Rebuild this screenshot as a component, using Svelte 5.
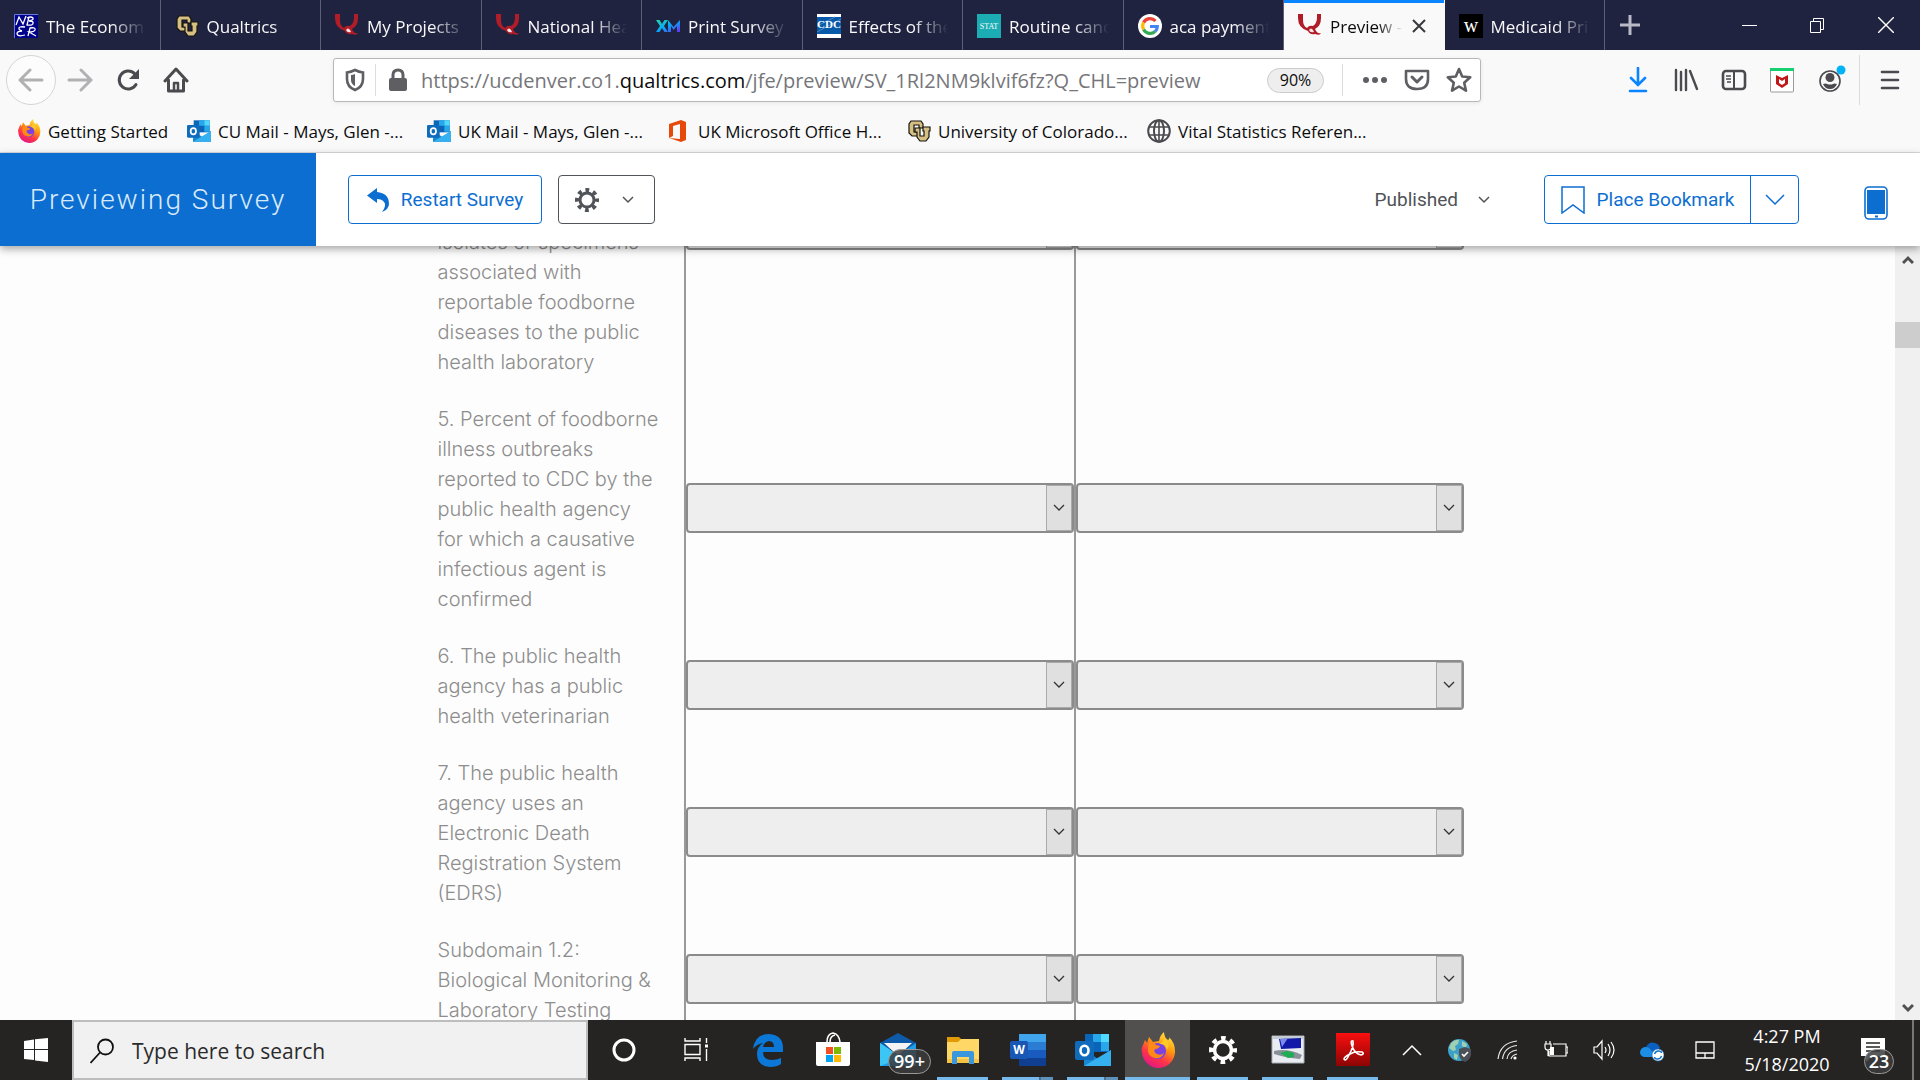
<script>
  const tabs = [
    { icon: 'nber', title: 'The Econom' },
    { icon: 'cu', title: 'Qualtrics' },
    { icon: 'qual', title: 'My Projects' },
    { icon: 'qual', title: 'National Hea' },
    { icon: 'xm', title: 'Print Survey' },
    { icon: 'cdc', title: 'Effects of the' },
    { icon: 'stat', title: 'Routine canc' },
    { icon: 'google', title: 'aca payment' },
    { icon: 'qual', title: 'Preview -', active: true },
    { icon: 'wapo', title: 'Medicaid Pri' }
  ];

  const bookmarks = [
    { icon: 'firefox', title: 'Getting Started' },
    { icon: 'outlook', title: 'CU Mail - Mays, Glen -...' },
    { icon: 'outlook', title: 'UK Mail - Mays, Glen -...' },
    { icon: 'office', title: 'UK Microsoft Office H...' },
    { icon: 'cu', title: 'University of Colorado...' },
    { icon: 'globe', title: 'Vital Statistics Referen...' }
  ];

  const rows = [
    { id: 'q4', lines: ['isolates or specimens', 'associated with', 'reportable foodborne', 'diseases to the public', 'health laboratory'] },
    { id: 'q5', lines: ['5. Percent of foodborne', 'illness outbreaks', 'reported to CDC by the', 'public health agency', 'for which a causative', 'infectious agent is', 'confirmed'] },
    { id: 'q6', lines: ['6. The public health', 'agency has a public', 'health veterinarian'] },
    { id: 'q7', lines: ['7. The public health', 'agency uses an', 'Electronic Death', 'Registration System', '(EDRS)'] },
    { id: 's12', lines: ['Subdomain 1.2:', 'Biological Monitoring &', 'Laboratory Testing'] }
  ];

  const apps = [
    { icon: 'edge', label: 'Microsoft Edge' },
    { icon: 'store', label: 'Microsoft Store' },
    { icon: 'mail', label: 'Mail', badge: '99+' },
    { icon: 'explorer', label: 'File Explorer', open: true },
    { icon: 'word', label: 'Word', open: true, stacked: true },
    { icon: 'outlook', label: 'Outlook', open: true, stacked: true },
    { icon: 'firefox', label: 'Firefox', open: true, current: true },
    { icon: 'settings', label: 'Settings', open: true },
    { icon: 'remote', label: 'Remote session', open: true },
    { icon: 'acrobat', label: 'Acrobat', open: true }
  ];

  const tray = [
    { icon: 'up', label: 'Show hidden icons' },
    { icon: 'vpn', label: 'Secure connection' },
    { icon: 'wifi', label: 'Network' },
    { icon: 'battery', label: 'Battery' },
    { icon: 'sound', label: 'Volume' },
    { icon: 'onedrive', label: 'OneDrive' },
    { icon: 'touchpad', label: 'Touchpad' }
  ];
</script>

{#snippet art(name)}
  {#if name === 'nber'}
    <svg viewBox="0 0 24 24"><path fill="#00008b" d="M0 0h24v24H0z" /><path d="M.5 24V.5H24" fill="none" stroke="#6a7ad8" /><path d="M2 11 5 3l4 7 3-8M15 3l-2 8q7 1 6-3-1-1-4-1 5-1 4-3-2-2-6 0M11 13q-7-1-6 2 0 1 3 2-5 0-5 3 1 3 8 1M14 22l2-8q6-1 5 2-1 2-6 2l7 4" fill="none" stroke="#fff" stroke-width="1.300" /></svg>
  {:else if name === 'cu'}
    <svg viewBox="0 0 24 24"><path d="M4 2h10l2 3v4h-4V6H7v7h4v4H5l-3-3V5z" fill="#d6bf82" stroke="#17150f" stroke-width="1.200" /><path d="M8 9h5v8h4v-5h-1V8h7v4h-1v6l-3 4h-6l-3-4v-5H8z" fill="#d6bf82" stroke="#17150f" stroke-width="1.200" /></svg>
  {:else if name === 'qual'}
    <svg viewBox="0 0 24 24"><path d="M0 0h5v6q0 6 4 8 2-3 6-2 4-3 4-8V0h4v4q0 8-6 11l1 2q2 3 5 2-1 3-6 1-5 1-7-3Q0 14 0 4z" fill="#b01c27" /><path d="M11 16q2-3 4 0l1 2q-4 1-5-2" fill="#f7e3e5" /></svg>
  {:else if name === 'xm'}
    <svg viewBox="0 0 24 24"><defs><linearGradient id="xg" x2="1" y2="1"><stop stop-color="#21dbaa" /><stop offset=".5" stop-color="#06a7fa" /><stop offset="1" stop-color="#6e2cf5" /></linearGradient></defs><path d="m0 6 4 6-4 6h3.500l2.500-4 2.500 4H12l-4-6 4-6H8.500L6 10 3.500 6zM12 18V6l5.500 7L24 6v12h-3v-6l-3.500 4-2.500-4v6z" fill="url(#xg)" /></svg>
  {:else if name === 'cdc'}
    <svg viewBox="0 0 24 24"><path fill="#fff" d="M0 0h24v24H0z" /><path fill="#075aaa" d="M0 3h24v17H0z" /><path d="M0 18 24 5M0 12 18 3" stroke="#4c8bc6" /><text x="12" y="14" text-anchor="middle" font-family="Liberation Serif, serif" font-size="11" font-weight="700" fill="#fff">CDC</text></svg>
  {:else if name === 'stat'}
    <svg viewBox="0 0 24 24"><path fill="#1bacb4" d="M0 0h24v24H0z" /><text x="12" y="15" text-anchor="middle" font-family="Liberation Serif, serif" font-size="8" fill="#fff">STAT</text></svg>
  {:else if name === 'google'}
    <svg viewBox="0 0 24 24"><circle cx="12" cy="12" r="12" fill="#fff" /><g fill="none" stroke-width="3.200"><path d="M17.500 7A7.300 7.300 0 0 0 5.600 8.500" stroke="#ea4335" /><path d="M5.600 8.500a7.300 7.300 0 0 0 0 7" stroke="#fbbc05" /><path d="M5.600 15.500A7.300 7.300 0 0 0 17 17.500" stroke="#34a853" /><path d="M17 17.500q2.300-2 2.300-5H12" stroke="#4285f4" /></g></svg>
  {:else if name === 'wapo'}
    <svg viewBox="0 0 24 24"><path d="M0 0h24v24H0z" /><text x="12" y="18" text-anchor="middle" font-family="Liberation Serif, serif" font-size="20" font-weight="400" fill="#fff">w</text></svg>
  {:else if name === 'firefox'}
    <svg viewBox="0 0 36 36"><defs><linearGradient id="fx" x1=".85" y1="0" x2=".3" y2="1"><stop stop-color="#fff04a" /><stop offset=".4" stop-color="#ff980e" /><stop offset=".7" stop-color="#ff3647" /><stop offset="1" stop-color="#e31587" /></linearGradient></defs><path d="M3 13 5 8l2 3 2-6 4 5 6-1q1-6 5-9 0 5 4 8 2-1 1-3 6 6 6 14a16 16 0 0 1-33 1q-1-4 1-7z" fill="url(#fx)" /><circle cx="18" cy="19" r="8" fill="#7a42e5" /><path d="M9 11q4-2 7 2l4 1q-1 3-5 3-2 3 2 5 4 2 7-1-2 6-9 5-8-2-7-10z" fill="#ff8b16" /><path d="M19 12q7-1 8 6l2-5q-2-6-5-7 0 4-5 6" fill="#ffc928" /></svg>
  {:else if name === 'outlook'}
    <svg viewBox="0 0 36 36"><path fill="#0a64b8" d="M10 2h24v18H10z" /><path fill="#28a8ea" d="M18 2h8v8h-8zM26 10h8v9h-8z" /><path fill="#50d9ff" d="M26 2h8v8h-8z" /><path fill="#1a86d0" d="M9 17v17h27V18L23 27z" /><path fill="#35b1f0" d="M9 34h27V18z" /><rect y="9" width="19" height="19" rx="2" fill="#0f6cbd" /><ellipse cx="9.500" cy="18.500" rx="4" ry="4.700" fill="none" stroke="#fff" stroke-width="2.600" /></svg>
  {:else if name === 'office'}
    <svg viewBox="0 0 24 24"><path d="m2 5 12-4 5 2v18l-5 2-12-4 11 1V5L6 7v10l-4 2z" fill="#e64a0a" /></svg>
  {:else if name === 'globe'}
    <svg viewBox="0 0 24 24" fill="none" stroke="#4a4a4f" stroke-width="2"><circle cx="12" cy="12" r="10.800" /><ellipse cx="12" cy="12" rx="5" ry="10.800" /><path d="M12 1v22M2 8h20M2 16h20" stroke-width="1.600" /></svg>
  {:else if name === 'edge'}
    <svg viewBox="0 0 36 36"><path d="M3 17Q5 2 19 2q14 1 14 14v4H13q0 8 9 8 5 0 9-2v6q-4 3-11 3Q7 34 7 22q0-7 6-11-6 1-10 6m10-2h11q0-6-5-6-5 1-6 6" fill="#0b78d7" /></svg>
  {:else if name === 'store'}
    <svg viewBox="0 0 36 36"><path d="M12 10q0-8 6-9 6 1 7 9M15 10q0-6 5-7" fill="none" stroke="#fff" stroke-width="1.600" /><path fill="#fff" d="M1 10h34v22q0 2-2 2H3q-2 0-2-2z" /><path fill="#f25022" d="M11 15h7v7h-7z" /><path fill="#7fba00" d="M19 15h7v7h-7z" /><path fill="#00a4ef" d="M11 23h7v7h-7z" /><path fill="#ffb900" d="M19 23h7v7h-7z" /></svg>
  {:else if name === 'mail'}
    <svg viewBox="0 0 36 36"><path fill="#0d5ba8" d="M0 11 18 1l18 10v6H0z" /><path fill="#f4f4f4" d="M4 11h28L18 24z" /><path fill="#1d9de6" d="M0 11v23h36V11L18 23z" /><path fill="#3cc6f6" d="M0 34V11l22 15z" /></svg>
  {:else if name === 'explorer'}
    <svg viewBox="0 0 36 36"><path fill="#e09a06" d="M2 5h12l3 3v4H2z" /><path fill="#ffd766" d="M2 10h11l3-3h18v24H2z" /><path fill="#f6c343" d="M2 27h32v4H2z" /><path fill="#3a96dd" d="M7 32V21q0-2 2-2h18q2 0 2 2v11h-5v-7H12v7z" /></svg>
  {:else if name === 'word'}
    <svg viewBox="0 0 36 36"><path fill="#41a5ee" d="M9 2h27v8H9z" /><path fill="#2b7cd3" d="M9 10h27v8H9z" /><path fill="#185abd" d="M9 18h27v8H9z" /><path fill="#103f91" d="M9 26h27v8H9z" /><rect y="9" width="18" height="18" rx="2" fill="#1857b5" /><text x="9" y="22" text-anchor="middle" font-family="Open Sans, sans-serif" font-size="12" font-weight="700" fill="#fff">W</text></svg>
  {:else if name === 'settings'}
    <svg viewBox="0 0 36 36"><circle cx="18" cy="18" r="8.500" fill="none" stroke="#fff" stroke-width="3.600" /><circle cx="18" cy="18" r="12" fill="none" stroke="#fff" stroke-width="4" stroke-dasharray="4.700 4.725" stroke-dashoffset="2.350" /></svg>
  {:else if name === 'remote'}
    <svg viewBox="0 0 36 36"><path fill="#e9edf2" stroke="#a8adb4" d="M2 4h32v27H2z" /><path fill="#c5ccd4" d="M2 4h32v3H2z" /><path fill="#1019a8" d="m9 7 22-1v10l-20 1z" /><path fill="#7e8bea" d="m10 7 8-1-6 9z" /><path fill="#8a9098" d="M4 19q14-3 28 4l-2 4Q16 26 4 22z" /><path fill="#1ead55" d="m10 21 7-2 7 2v4l-6 1z" /></svg>
  {:else if name === 'acrobat'}
    <svg viewBox="0 0 36 36"><defs><linearGradient id="ac" x2="0" y2="1"><stop stop-color="#fa0f0f" /><stop offset="1" stop-color="#8c0404" /></linearGradient></defs><path fill="url(#ac)" d="M1 1h34v33H1z" /><path d="M18 9q-3-1-1 5 3 8 9 9 4-1 1-3-7-1-12 2-6 3-6 5 2 3 5-4 5-9 4-14z" fill="none" stroke="#fff" stroke-width="1.600" /></svg>
  {:else if name === 'up'}
    <svg viewBox="0 0 24 24"><path d="m3 17 9-9 9 9" fill="none" stroke="#fff" stroke-width="1.500" /></svg>
  {:else if name === 'vpn'}
    <svg viewBox="0 0 24 24"><circle cx="11" cy="12" r="11" fill="#3ba1cb" /><path fill="#9fd0b0" d="M3 5q4-4 8-3l-1 4-3 2 1 4-3 1-4-3zM14 3l5 3-1 4-4-2zM6 15l4 2-1 5-3-2z" /><path fill="#4b5057" d="m17 9 6 2v6q-1 5-6 7-5-2-6-7v-6z" /><path d="m14 16 2 2 4-4" fill="none" stroke="#fff" stroke-width="1.600" /></svg>
  {:else if name === 'wifi'}
    <svg viewBox="0 0 24 24" fill="none" stroke="#e8e8e8" stroke-width="1.200"><path d="M2 21Q4 5 21 3M6.500 21Q8 9 21 7.500M11 21q1-8 10-9M15 21q1-4 6-5" /><circle cx="19" cy="20" r="1.600" fill="#fff" stroke="none" /></svg>
  {:else if name === 'battery'}
    <svg viewBox="0 0 24 24" fill="none" stroke="#fff" stroke-width="1.200"><path d="M9 6h13v12H5v-5M22 9h2v6h-2M2 3v3M6 3v3M1 6h6v3q0 3-3 3T1 9zM4 12v6" /><path fill="#fff" stroke="none" d="M6 9h4v8H6z" /></svg>
  {:else if name === 'sound'}
    <svg viewBox="0 0 24 24" fill="none" stroke="#fff" stroke-width="1.200"><path d="M2 9h3l5-6v18l-5-6H2zM13 9q2 3 0 6M16 6q4 6 0 12M19 4q6 8 0 16" /></svg>
  {:else if name === 'onedrive'}
    <svg viewBox="0 0 24 24"><path fill="#0a5fc0" d="M6 9q3-6 9-4 4 1 5 5l-8 6z" /><path fill="#1d8ee6" d="M4 19q-4-1-4-5 1-5 6-5 3 0 5 3l6 7z" /><circle cx="18" cy="17" r="6" fill="#fff" stroke="#1673c4" stroke-width=".6" /><path d="M14.500 16q1-3 4-3t3 2M21.500 18q-1 3-4 3t-3-2" fill="none" stroke="#1673c4" stroke-width="1.400" /></svg>
  {:else if name === 'touchpad'}
    <svg viewBox="0 0 24 24" fill="none" stroke="#fff" stroke-width="1.300"><path d="M3 4h18v16H3zM3 15h18M12 15v5" /></svg>
  {/if}
{/snippet}

<div class="screen">
  <nav class="tabs" aria-label="Tabs">
    <div class="strip">
      {#each tabs as tab}
        <div class="tab" class:active={tab.active}>
          <span class="i24">{@render art(tab.icon)}</span>
          <span class="title">{tab.title}</span>
          {#if tab.active}
            <button class="plain" aria-label="Close tab"><svg width="16" height="16" viewBox="0 0 16 16"><path d="m2 2 12 12M14 2 2 14" stroke="#38383d" stroke-width="2" /></svg></button>
          {/if}
        </div>
      {/each}
    </div>
    <div class="window">
      <button class="plain" aria-label="New tab"><svg width="22" height="22" viewBox="0 0 22 22"><path d="M11 1v20M1 11h20" stroke="#b9bac6" stroke-width="3" /></svg></button>
      <span class="space"></span>
      <button class="plain ctl" aria-label="Minimize"><svg width="16" height="16" viewBox="0 0 16 16"><path d="M0 8.500h15" stroke="#fff" /></svg></button>
      <button class="plain ctl" aria-label="Restore"><svg width="16" height="16" viewBox="0 0 16 16" fill="none" stroke="#fff"><path d="M.5 4.500h10v11H.5zM3.500 4.500v-3h10v11h-3" /></svg></button>
      <button class="plain ctl" aria-label="Close"><svg width="16" height="16" viewBox="0 0 16 16"><path d="m0 0 16 16M16 0 0 16" stroke="#fff" stroke-width="1.400" /></svg></button>
    </div>
  </nav>

  <div class="toolbar">
    <button class="plain back" aria-label="Back"><svg width="26" height="26" viewBox="0 0 26 26" fill="none" stroke="#b1b1b3" stroke-width="3" stroke-linecap="round" stroke-linejoin="round"><path d="M24 13H2M12 3 2 13l10 10" /></svg></button>
    <button class="plain nav" aria-label="Forward"><svg width="26" height="26" viewBox="0 0 26 26" fill="none" stroke="#b1b1b3" stroke-width="3" stroke-linecap="round" stroke-linejoin="round"><path d="M2 13h22M14 3l10 10-10 10" /></svg></button>
    <button class="plain nav" aria-label="Reload"><svg width="26" height="26" viewBox="0 0 26 26"><path d="M21 17.500A9 9 0 1 1 19 6l3 4" fill="none" stroke="#4a4a4f" stroke-width="3" stroke-linecap="round" /><path d="M24 2v10H14z" fill="#4a4a4f" /></svg></button>
    <button class="plain nav" aria-label="Home"><svg width="26" height="26" viewBox="0 0 26 26" fill="none" stroke="#4a4a4f" stroke-width="3" stroke-linecap="round" stroke-linejoin="round"><path d="M2 14 13 2l11 12M5.500 13v11h15V13" /><path d="M11 24v-8h4v8" stroke-width="2.500" /></svg></button>

    <div class="address">
      <svg width="20" height="24" viewBox="0 0 20 24"><path d="M10 2q4 2 8 2.500V11q0 8-8 11-8-3-8-11V4.500Q6 4 10 2z" fill="none" stroke="#5f5f63" stroke-width="2.600" /><path d="M10 6q-2 1-4 1v5q0 4 4 6z" fill="#5f5f63" /></svg>
      <span class="rule"></span>
      <svg width="20" height="24" viewBox="0 0 20 24"><path d="M5 11V7q0-5 5-5t5 5v4" fill="none" stroke="#5f5f63" stroke-width="3" /><rect x="1" y="10" width="18" height="13" rx="2" fill="#5f5f63" /></svg>
      <a class="url" href="https://ucdenver.co1.qualtrics.com/jfe/preview/SV_1Rl2NM9klvif6fz?Q_CHL=preview">https://ucdenver.co1.<b>qualtrics.com</b>/jfe/preview/SV_1Rl2NM9klvif6fz?Q_CHL=preview</a>
      <button class="zoom">90%</button>
      <span class="rule"></span>
      <span class="actions">
        <button class="plain" aria-label="Page actions"><svg width="26" height="26" viewBox="0 0 26 26" fill="#5f5f63"><circle cx="4" cy="13" r="3" /><circle cx="13" cy="13" r="3" /><circle cx="22" cy="13" r="3" /></svg></button>
        <button class="plain" aria-label="Save to Pocket"><svg width="26" height="26" viewBox="0 0 26 26" fill="none" stroke="#5f5f63" stroke-linejoin="round" stroke-linecap="round"><path d="M2 4h22v8q0 10-11 10T2 12z" stroke-width="2.600" /><path d="m8 10 5 5 5-5" stroke-width="3" /></svg></button>
        <button class="plain" aria-label="Bookmark this page"><svg width="26" height="26" viewBox="0 0 26 26" fill="none" stroke="#5f5f63" stroke-width="2.600" stroke-linejoin="round"><path d="m13 2 3.200 7.500 8 .8-6 5.400 1.800 8-7-4.200-7 4.200 1.800-8-6-5.400 8-.8z" /></svg></button>
      </span>
    </div>

    <div class="tools">
      <button class="plain" aria-label="Downloads"><svg width="24" height="26" viewBox="0 0 24 26" fill="none" stroke="#0a84ff" stroke-width="2.600" stroke-linecap="round"><path d="M12 1v17M5 11l7 7 7-7M4 24h16" /></svg></button>
      <button class="plain" aria-label="Library"><svg width="26" height="24" viewBox="0 0 26 24" stroke="#4a4a4f" stroke-width="2.400" stroke-linecap="round"><path d="M3 2v20M8 4v18M13 2v20M17 3l7 18" /></svg></button>
      <button class="plain" aria-label="Sidebars"><svg width="26" height="24" viewBox="0 0 26 24" fill="none" stroke="#4a4a4f" stroke-width="2.600"><rect x="2" y="3" width="22" height="18" rx="3" /><path d="M13 3v18" stroke-width="2" /><path d="M5 8h5M5 11h5M6 14h4" stroke-width="1.400" /></svg></button>
      <button class="plain" aria-label="McAfee"><svg width="24" height="26" viewBox="0 0 24 26"><rect x=".5" y="2" width="23" height="23" rx="1" fill="#fff" stroke="#9a9a9e" /><path fill="#14d070" d="M0 1h24v3H0z" /><path d="m6 8 6 3 6-3v9l-6 4-6-4zm3 4v4l3 2 3-2v-4l-3 2z" fill="#c01818" fill-rule="evenodd" /></svg></button>
      <button class="plain" aria-label="Account"><svg width="32" height="32" viewBox="0 0 32 32"><circle cx="16" cy="17" r="10" fill="none" stroke="#4a4a4f" stroke-width="1.600" /><circle cx="16" cy="13.500" r="4.500" fill="#4a4a4f" /><path d="M9 20q3-1 4 0 3 1 6 0 1-1 4 0-2 5-7 5t-7-5" fill="#4a4a4f" /><circle cx="27" cy="6" r="4.500" fill="#00b3f4" /></svg></button>
      <button class="plain menu" aria-label="Menu"><svg width="20" height="20" viewBox="0 0 20 20" stroke="#4a4a4f" stroke-width="2.600" stroke-linecap="round"><path d="M2 2h16M2 10h16M2 18h16" /></svg></button>
    </div>
  </div>

  <div class="bookmarks">
    {#each bookmarks as mark}
      <a href="#mark"><span class="i24">{@render art(mark.icon)}</span>{mark.title}</a>
    {/each}
  </div>

  <header>
    <h1>Previewing Survey</h1>
    <button class="box blue restart"><svg width="24" height="26" viewBox="0 0 24 26"><path d="M0 8.500 10 1v4q12 1 12 12 0 5-7 8 5-7 2-10-2-3-7-3v4z" fill="#0d6ed1" /></svg>Restart Survey</button>
    <button class="box gear" aria-label="Tools">
      <svg width="26" height="26" viewBox="0 0 26 26" fill="none" stroke="#505357"><circle cx="13" cy="13" r="7" stroke-width="3" /><circle cx="13" cy="13" r="10" stroke-width="4" stroke-dasharray="3.800 4.054" stroke-dashoffset="1.900" /></svg>
      <svg width="12" height="8" viewBox="0 0 12 8"><path d="m1 1 5 5 5-5" fill="none" stroke="#505357" stroke-width="1.500" /></svg>
    </button>
    <span class="space"></span>
    <button class="plain published">Published<svg width="12" height="8" viewBox="0 0 12 8"><path d="m1 1 5 5 5-5" fill="none" stroke="#505357" stroke-width="1.500" /></svg></button>
    <div class="split">
      <button class="plain place"><svg width="24" height="28" viewBox="0 0 24 28"><path d="M1 1h22v26l-11-8-11 8z" fill="none" stroke="#0d6ed1" stroke-width="1.500" /></svg>Place Bookmark</button>
      <button class="plain more" aria-label="More bookmark options"><svg width="20" height="12" viewBox="0 0 20 12"><path d="m1 1 9 9 9-9" fill="none" stroke="#0d6ed1" stroke-width="1.500" /></svg></button>
    </div>
    <button class="plain phone" aria-label="Mobile view"><svg width="24" height="34" viewBox="0 0 24 34"><rect x="1" y="1" width="22" height="32" rx="4" fill="#fff" stroke="#0d6ed1" stroke-width="1.600" /><path fill="#0d6ed1" d="M3 4h18v24H3zM11 29.500h3v2h-3z" /></svg></button>
  </header>

  <main>
    <div class="page">
      <table>
        <tbody>
          {#each rows as row, i}
            <tr class:scrolled={i === 0}>
              <th scope="row" id={row.id}>{row.lines.join('\n')}</th>
              {#each [1, 2] as col}
                <td>
                  <div class="pick">
                    <select aria-labelledby={row.id}><option></option></select>
                    <span class="arrow"><svg width="12" height="8" viewBox="0 0 12 8"><path d="m1 1 5 5 5-5" fill="none" stroke="#333" stroke-width="1.300" /></svg></span>
                  </div>
                </td>
              {/each}
            </tr>
          {/each}
        </tbody>
      </table>
    </div>
    <div class="scroll">
      <svg width="12" height="10" viewBox="0 0 12 10"><path d="m1 8 5-5 5 5" fill="none" stroke="#505050" stroke-width="3" /></svg>
      <span class="thumb"></span>
      <svg width="12" height="10" viewBox="0 0 12 10"><path d="m1 2 5 5 5-5" fill="none" stroke="#505050" stroke-width="3" /></svg>
    </div>
  </main>

  <footer>
    <button class="plain start" aria-label="Start"><svg width="24" height="24" viewBox="0 0 24 24" fill="#fff"><path d="m0 3 10-1.500V11H0zM11 1.300 24 0v11H11zM0 12h10v10L0 21zM11 12h13v12l-13-1.600z" /></svg></button>
    <label class="search">
      <svg width="24" height="26" viewBox="0 0 24 26" fill="none" stroke="#111" stroke-width="1.800"><circle cx="15.500" cy="9" r="7.500" /><path d="M10 14.500.5 25" /></svg>
      <input type="text" aria-label="Search" placeholder="Type here to search" />
    </label>
    <button class="plain sys" aria-label="Cortana"><svg width="26" height="26" viewBox="0 0 26 26"><circle cx="13" cy="13" r="10" fill="none" stroke="#fff" stroke-width="3" /></svg></button>
    <button class="plain sys" aria-label="Task view"><svg width="26" height="26" viewBox="0 0 26 26" fill="none" stroke="#fff" stroke-width="1.400"><path d="M2 1v3h15V1M2 7.500h15v10H2zM2 24v-3h15v3M23.500 1v5M23.500 12v12" /><path fill="#fff" stroke="none" d="M22 7.500h3v3h-3z" /></svg></button>
    <div class="apps">
      {#each apps as app}
        <button class="plain app" class:open={app.open} class:current={app.current} class:stacked={app.stacked} aria-label={app.label}>
          <span class="i36">{@render art(app.icon)}</span>
          {#if app.badge}<span class="badge">{app.badge}</span>{/if}
        </button>
      {/each}
    </div>
    <span class="space"></span>
    {#each tray as item}
      <button class="plain traybtn" aria-label={item.label}><span class="i24">{@render art(item.icon)}</span></button>
    {/each}
    <div class="clock"><span>4:27 PM</span><span>5/18/2020</span></div>
    <button class="plain notes" aria-label="Notifications">
      <svg width="24" height="26" viewBox="0 0 24 26"><path fill="#fff" d="M0 1h24v18h-13l-6 6v-6H0z" /><path d="M5 6h14M5 10h14M5 14h14" stroke="#252423" stroke-width="1.400" /></svg>
      <span class="badge">23</span>
    </button>
    <span class="edge"></span>
  </footer>
</div>

<style>
  :global(body) { margin: 0; }
  .screen { height: 100vh; display: flex; flex-direction: column; overflow: hidden; background: #fdfdfd; font-family: 'Open Sans', 'Noto Sans', sans-serif; font-size: 17px; color: #0c0c0d; }
  .screen :global(svg) { display: block; flex: none; }
  .i24, .i36 { flex: none; }
  .i24 :global(svg) { width: 24px; height: 24px; }
  .i36 :global(svg) { width: 36px; height: 36px; }
  a { color: inherit; text-decoration: none; }
  button { font: inherit; color: inherit; padding: 0; display: flex; align-items: center; justify-content: center; }
  .plain { border: 0; background: none; }
  .space { flex: 1; }

  .tabs { height: 50px; flex: none; display: flex; background: #202340; color: #f9f9fa; }
  .strip { flex: 1; display: grid; grid-template-columns: repeat(10, minmax(0, 1fr)); }
  .tab { display: flex; align-items: center; gap: 8px; padding: 2px 14px 0; border-right: 1px solid #5d5f76; }
  .title { flex: 1; overflow: hidden; white-space: nowrap; mask-image: linear-gradient(to right, #000 65%, transparent); }
  .active { padding-right: 17px; background: #f9f9fa; color: #0c0c0d; box-shadow: inset 0 3px #0a84ff; border-right-color: #f9f9fa; }
  .window { width: 315px; display: flex; }
  .window > :first-child { width: 50px; }
  .window .ctl { width: 68px; }

  .toolbar { height: 60px; flex: none; display: flex; align-items: center; padding-left: 6px; background: #f9f9fa; }
  .back { width: 50px; height: 50px; border: 1px solid #d5d5d7; border-radius: 50%; background: #fcfcfc; }
  .nav { width: 48px; height: 48px; }
  .address { flex: 1; height: 42px; margin-left: 133px; display: flex; align-items: center; padding: 0 8px 0 11px; border: 1px solid #b8b8ba; border-radius: 3px; background: #fff; box-shadow: 0 1px 4px rgb(0 0 0 / 8%); }
  .rule { width: 1px; height: 32px; margin: 0 12px 0 10px; background: #dcdcde; }
  .url { flex: 1; margin-left: 13px; font-size: 20px; color: #76767a; white-space: nowrap; }
  .url b { font-weight: 400; color: #0c0c0d; }
  .zoom { width: 57px; height: 25px; border: 1px solid #ccc; border-radius: 13px; background: #eee; font-size: 16px; margin-right: 8px; }
  .actions { display: flex; gap: 16px; margin-left: 7px; }
  .tools { display: flex; margin-left: 133px; height: 50px; }
  .tools button { width: 48px; }
  .tools .menu { width: 61px; border-left: 1px solid #dcdcde; margin-left: 5px; }

  .bookmarks { height: 42px; flex: none; display: grid; grid-template-columns: 170px repeat(5, 240px); padding-left: 17px; border-bottom: 1px solid #dcdcde; background: #f9f9fa; }
  .bookmarks a { display: flex; align-items: center; gap: 7px; white-space: nowrap; }

  header { position: relative; z-index: 1; height: 93px; flex: none; display: flex; align-items: center; background: #fff; box-shadow: 0 3px 8px rgb(0 0 0 / 35%); font-family: Roboto, sans-serif; font-size: 19px; color: #505357; }
  h1 { margin: 0 32px 0 0; width: 316px; height: 93px; display: flex; align-items: center; justify-content: center; background: #0d6ed1; color: #d9ebfb; font-weight: 300; font-size: 28px; letter-spacing: 2px; }
  .box { height: 49px; border: 1px solid #505357; border-radius: 4px; background: #fff; }
  .blue { border-color: #0d6ed1; color: #0d6ed1; }
  .restart { width: 194px; gap: 10px; margin-right: 16px; }
  .gear { width: 97px; gap: 22px; justify-content: flex-start; padding-left: 15px; }
  .published { gap: 20px; margin-right: 54px; }
  .split { height: 47px; display: flex; border: 1px solid #0d6ed1; border-radius: 4px; color: #0d6ed1; }
  .place { width: 205px; gap: 12px; }
  .more { width: 48px; border-left: 1px solid #0d6ed1; }
  .phone { margin: 6px 32px 0 65px; }

  main { flex: 1; min-height: 0; display: flex; }
  .page { flex: 1; overflow: hidden; }
  table { width: 1032px; margin: -185px auto 0; border-collapse: separate; border-spacing: 0; table-layout: fixed; }
  th { width: 246px; padding: 15px 0 12px 6px; text-align: left; vertical-align: bottom; white-space: pre; font-family: Inter, sans-serif; font-weight: 300; font-size: 20px; line-height: 30px; color: #8d8d8d; }
  td { padding: 0; border-left: 2px solid #999; vertical-align: middle; }
  .scrolled { height: 328px; }
  .pick { position: relative; }
  select { display: block; width: 100%; height: 50px; appearance: none; border: 2px solid #8b8b8b; border-radius: 4px; background: #eee; }
  .arrow { position: absolute; top: 2px; right: 2px; bottom: 2px; width: 24px; display: flex; align-items: center; justify-content: center; border: 1px solid #aaa; background: #e0e0e0; pointer-events: none; }
  .scroll { width: 25px; display: flex; flex-direction: column; align-items: center; padding: 9px 0 7px; background: #f0f0f0; }
  .thumb { width: 25px; height: 26px; margin-top: 57px; margin-bottom: auto; background: #cdcdcd; }

  footer { height: 60px; flex: none; display: flex; background: #252423; color: #fff; }
  .start { width: 72px; }
  .search { width: 516px; box-sizing: border-box; display: flex; align-items: center; gap: 18px; padding: 2px 16px 0; border: 2px solid #bdbdbd; background: #f1f1f1; }
  .search input { flex: 1; border: 0; padding: 0; background: none; outline: 0; font: inherit; font-size: 21px; color: #2b2b2b; }
  .search input::placeholder { color: #2b2b2b; opacity: 1; }
  .sys { width: 72px; }
  .apps { display: flex; margin-left: 3px; }
  .app { position: relative; width: 65px; }
  .app.open::after { content: ''; position: absolute; left: 7px; right: 7px; bottom: 0; height: 3px; background: #76b9ed; }
  .app.stacked::after { background: linear-gradient(to right, #76b9ed 37px, #4c6f8b 37px, #4c6f8b 39px, #5f92bb 39px); }
  .app.current { background: #52504f; }
  .app.current::after { left: 0; right: 0; }
  .badge { position: absolute; box-sizing: border-box; border: 1px solid #999; border-radius: 13px; background: rgb(60 60 60 / 85%); color: #fff; font-weight: 600; font-size: 18px; line-height: 23px; text-align: center; }
  .app .badge { left: 23px; bottom: 6px; width: 43px; height: 25px; }
  .traybtn { width: 48px; }
  .traybtn:has(+ .clock) { width: 57px; }
  .clock { width: 108px; display: flex; flex-direction: column; align-items: center; justify-content: center; font-size: 18px; line-height: 28px; }
  .notes { position: relative; width: 71px; }
  .notes svg { margin-right: 8px; }
  .notes .badge { left: 23px; bottom: 6px; width: 30px; height: 25px; }
  .edge { width: 6px; border-left: 2px solid #777; }
</style>
